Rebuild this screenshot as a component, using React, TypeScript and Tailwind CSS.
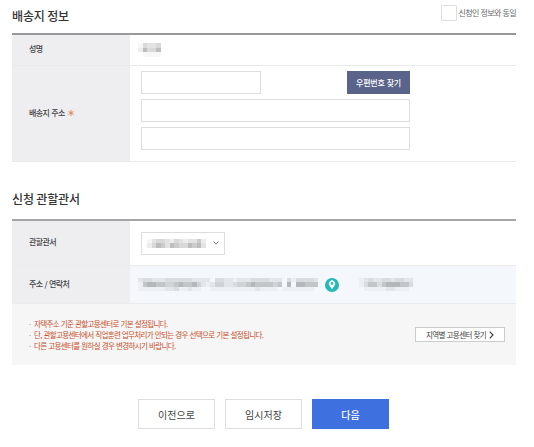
import { ReactNode } from 'react';

// Masked personal data: each digit is the darkness of one 4.5px cell
const masks = {
  name: ['14334', '26446', '01111'],
  office: ['1344324323352', '2465365446563'],
  address: [
    '2332223333332222033221222333322203133332',
    '1566554456556421244223445655554506066555',
    '1111112231121100111111111121111011111110',
  ],
  phone: ['123223323322', '135535666553', '011111221110'],
};

const shades = [
  'bg-transparent',
  'bg-black/3',
  'bg-black/7',
  'bg-black/11',
  'bg-black/15',
  'bg-black/20',
  'bg-black/26',
  'bg-black/32',
];

function Mask({ rows }: { rows: string[] }) {
  return (
    <div className="shrink-0">
      {rows.map((row, r) => (
        <div key={r} className="flex">
          {row.split('').map((level, i) => (
            <span key={i} className={`w-[4.5px] h-[4.5px] ${shades[Number(level)]}`} />
          ))}
        </div>
      ))}
    </div>
  );
}

function HeaderCell({ children }: { children: ReactNode }) {
  return (
    <div className="w-[118px] shrink-0 bg-[#eeeef1] pl-[17px] pb-[2px] flex items-center text-[8px] font-medium tracking-[-0.6px] [word-spacing:0.8px] text-[#444]">
      {children}
    </div>
  );
}

export default function App() {
  const notices = [
    '자택주소 기준 관할고용센터로 기본 설정됩니다.',
    '단, 관할고용센터에서 직업훈련 업무처리가 안되는 경우 선택으로 기본 설정됩니다.',
    '다른 고용센터를 원하실 경우 변경하시기 바랍니다.',
  ];

  return (
    <div className="w-[534px] h-[447px] overflow-hidden bg-white pl-3 pr-[18px] font-['Noto_Sans_CJK_KR',sans-serif] whitespace-nowrap">
      {/* Delivery information */}
      <div className="h-[33px] flex justify-between">
        <h2 className="pt-[7px] text-[12px] leading-[18px] font-medium tracking-[-0.15px] text-[#333]">배송지 정보</h2>
        <label className="h-[26px] flex items-center gap-[2px] text-[8px] tracking-[-0.6px] [word-spacing:0.5px] text-[#666]">
          <span className="w-4 h-4 border border-[#ddd] rounded-[1px] bg-white" />
          신청인 정보와 동일
        </label>
      </div>
      <section className="border-t-2 border-[#999]">
        <div className="flex h-[31px] border-b border-[#e9e9eb]">
          <HeaderCell>성명</HeaderCell>
          <div className="flex items-center pl-2">
            <Mask rows={masks.name} />
          </div>
        </div>
        <div className="flex h-24 border-b border-[#e9e9eb]">
          <HeaderCell>
            배송지 주소
            <svg className="w-[6px] h-[6px] ml-[3px]" viewBox="0 0 6 6" stroke="#df8a5f">
              <path d="M3 0v6M.4 1.5l5.2 3M.4 4.5l5.2-3" />
            </svg>
          </HeaderCell>
          <div className="w-[280px] pl-[11px] pt-[5px] flex flex-col gap-[5px]">
            <div className="flex justify-between">
              <input className="w-[120px] h-[23px] border border-[#ddd]" />
              <button className="w-[63px] h-[23px] bg-[#5a638a] text-white text-[8px] font-medium tracking-[-0.2px] [word-spacing:0.5px]">
                우편번호 찾기
              </button>
            </div>
            <input className="h-[23px] border border-[#ddd]" />
            <input className="h-[23px] border border-[#ddd]" />
          </div>
        </div>
      </section>

      {/* Responsible office */}
      <h2 className="mt-[28px] h-[29px] text-[12px] leading-[18px] font-medium tracking-[-0.15px] text-[#333]">
        신청 관할관서
      </h2>
      <section className="border-t-2 border-[#a6a6a8]">
        <div className="flex h-[45px] border-b border-[#e9ebed]">
          <HeaderCell>관할관서</HeaderCell>
          <div className="flex items-center pl-[11px]">
            <div className="w-[84px] h-[23px] border border-[#ddd] flex items-center justify-between px-[5px]">
              <Mask rows={masks.office} />
              <svg className="w-[6px] h-[4px]" viewBox="0 0 6 4" fill="none" stroke="#777">
                <path d="M.5.5 3 3.2 5.5.5" />
              </svg>
            </div>
          </div>
        </div>
        <div className="flex h-[38px] border-b border-[#e9ebed] bg-[#f4f8fc]">
          <HeaderCell>주소 / 연락처</HeaderCell>
          <div className="flex items-center pl-2">
            <Mask rows={masks.address} />
            <svg className="w-[14px] h-[14px] ml-[7px] shrink-0" viewBox="0 0 14 14">
              <circle cx="7" cy="7" r="7" fill="#25b8b7" />
              <path d="M7 11.2 4.7 7.7a3.1 3.1 0 1 1 4.6 0Z" fill="#fff" />
              <circle cx="7" cy="5.4" r="1.3" fill="#25b8b7" />
            </svg>
            <div className="ml-5">
              <Mask rows={masks.phone} />
            </div>
          </div>
        </div>
        <div className="h-[61px] bg-[#f6f6f6] flex items-center justify-between pl-4 pr-[11px]">
          <ul className="text-[7.5px] leading-[11.2px] tracking-[-0.65px] [word-spacing:0.7px] text-[#c64f2b]">
            {notices.map((notice) => (
              <li key={notice} className="flex">
                <span className="w-[6px] text-[#888]">·</span>
                {notice}
              </li>
            ))}
          </ul>
          <button className="w-[90px] h-[15px] border border-[#ccc] bg-white flex items-center justify-center gap-[3px] text-[7.5px] tracking-[-0.6px] [word-spacing:0.6px] text-[#444]">
            지역별 고용센터 찾기
            <svg className="w-[5px] h-[8px]" viewBox="0 0 5 8" fill="none" stroke="#444" strokeWidth="1.2">
              <path d="M.7.7 4 4 .7 7.3" />
            </svg>
          </button>
        </div>
      </section>

      {/* Actions */}
      <div className="mt-[34px] pl-[126px] flex gap-[10px] text-[10px] text-[#444]">
        <button className="w-[77px] h-[30px] border border-[#ddd]">이전으로</button>
        <button className="w-[77px] h-[30px] border border-[#ddd]">임시저장</button>
        <button className="w-[77px] h-[30px] bg-[#3f70df] font-medium text-white">다음</button>
      </div>
    </div>
  );
}
